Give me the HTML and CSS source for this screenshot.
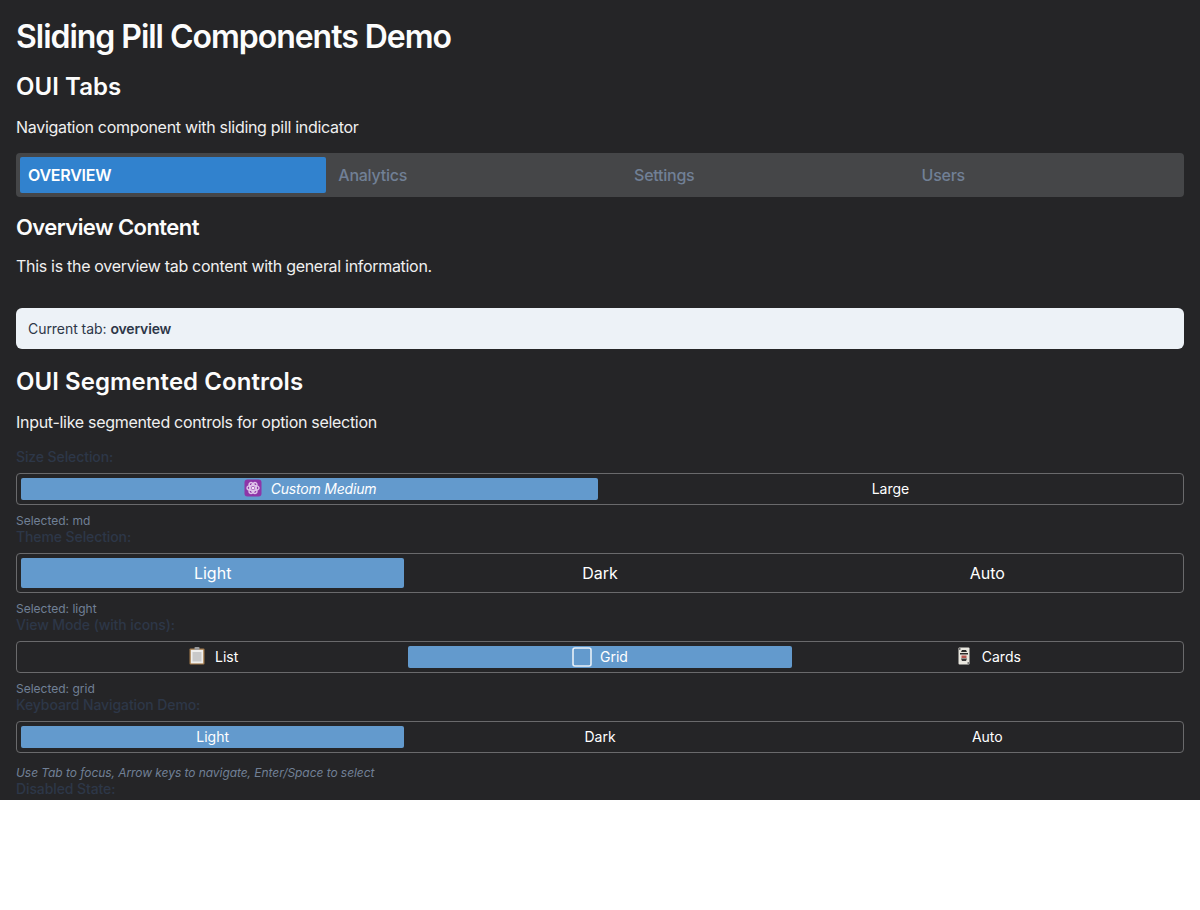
FILE: index.html
```html
<!DOCTYPE html>
<html lang="en">
<head>
<meta charset="utf-8">
<title>Sliding Pill Components Demo</title>
<link rel="stylesheet" href="styles.css">
</head>
<body>
<div class="page">
  <h1>Sliding Pill Components Demo</h1>
  <section>
    <h2>OUI Tabs</h2>
    <p class="lead">Navigation component with sliding pill indicator</p>
    <div class="tabs">
      <div class="tab tab-active">OVERVIEW</div>
      <div class="tab">Analytics</div>
      <div class="tab">Settings</div>
      <div class="tab">Users</div>
    </div>
    <div class="tab-panel">
      <h3>Overview Content</h3>
      <p class="lead">This is the overview tab content with general information.</p>
    </div>
    <div class="status">Current tab: <strong>overview</strong></div>
  </section>
  <section>
    <h2 class="seg-title">OUI Segmented Controls</h2>
    <p class="lead">Input-like segmented controls for option selection</p>

    <div class="demo">
      <div class="label">Size Selection:</div>
      <div class="seg">
        <div class="opt on">
          <svg class="ico" viewBox="0 0 18 18" aria-hidden="true">
            <rect x="0.5" y="0.5" width="17" height="17" rx="3" fill="#8e35a8"/>
            <g fill="none" stroke="#dfc4ea" stroke-width="1.4">
              <ellipse cx="9" cy="9" rx="6" ry="2.6"/>
              <ellipse cx="9" cy="9" rx="6" ry="2.6" transform="rotate(60 9 9)"/>
              <ellipse cx="9" cy="9" rx="6" ry="2.6" transform="rotate(120 9 9)"/>
            </g>
            <circle cx="9" cy="9" r="1.500" fill="#f3e6f7"/>
          </svg>
          <em>Custom Medium</em>
        </div>
        <div class="opt">Large</div>
      </div>
      <div class="hint">Selected: md</div>
    </div>

    <div class="demo">
      <div class="label">Theme Selection:</div>
      <div class="seg seg-lg">
        <div class="opt on">Light</div>
        <div class="opt">Dark</div>
        <div class="opt">Auto</div>
      </div>
      <div class="hint">Selected: light</div>
    </div>

    <div class="demo">
      <div class="label">View Mode (with icons):</div>
      <div class="seg">
        <div class="opt">
          <svg class="ico" viewBox="0 0 16 18" aria-hidden="true">
            <rect x="0.5" y="1.5" width="15" height="16" rx="1" fill="#a57c4c"/>
            <rect x="1.8" y="2.8" width="12.4" height="13.6" fill="#efeeec"/>
            <rect x="3.5" y="5" width="9" height="9.5" fill="#c9c9c9"/>
            <rect x="5.5" y="0" width="5" height="3" rx="0.8" fill="#9a9a9a"/>
          </svg>
          <span>List</span>
        </div>
        <div class="opt on">
          <svg class="ico ico-box" viewBox="0 0 20 20" aria-hidden="true">
            <rect x="1" y="1" width="18" height="18" rx="2" fill="none" stroke="#e8f0f8" stroke-width="1.6"/>
          </svg>
          <span>Grid</span>
        </div>
        <div class="opt">
          <svg class="ico" viewBox="0 0 12 18" aria-hidden="true">
            <rect x="0.5" y="0.5" width="11" height="17" rx="1" fill="#e8e6de"/>
            <path d="M3 5h6L8 3H4zM2 6h8v1.500H2z" fill="#2b2b2b"/>
            <path d="M3.500 8.500h5V11h-5z" fill="#b5544f"/>
            <path d="M3 11.500h6L8 14H4z" fill="#3a3a3a"/>
            <rect x="1" y="1" width="1.500" height="2" fill="#777"/>
            <rect x="9.500" y="15" width="1.500" height="2" fill="#777"/>
          </svg>
          <span>Cards</span>
        </div>
      </div>
      <div class="hint">Selected: grid</div>
    </div>

    <div class="demo">
      <div class="label">Keyboard Navigation Demo:</div>
      <div class="seg">
        <div class="opt on">Light</div>
        <div class="opt">Dark</div>
        <div class="opt">Auto</div>
      </div>
      <div class="hint hint-note">Use Tab to focus, Arrow keys to navigate, Enter/Space to select</div>
    </div>

    <div class="demo">
      <div class="label">Disabled State:</div>
    </div>
  </section>
</div>
</body>
</html>
```
FILE: styles.css
```css
html, body {
  margin: 0;
  padding: 0;
  background: #fff;
}
body {
  font-family: Inter, "Liberation Sans", sans-serif;
  color: #fff;
}
.page {
  box-sizing: border-box;
  height: 800px;
  overflow: hidden;
  background: #252527;
  padding: 16px 16px 0;
}
h1 {
  margin: 0 0 11px;
  font-size: 32px;
  line-height: 42px;
  font-weight: 600;
  letter-spacing: -1.03px;
  color: #fcfcfc;
}
h2 {
  margin: 0 0 10px;
  font-size: 24px;
  line-height: 36px;
  font-weight: 600;
  letter-spacing: 0.05px;
  color: #fcfcfc;
}
h3 {
  margin: 0 0 13px;
  font-size: 22px;
  line-height: 28px;
  font-weight: 600;
  letter-spacing: -0.55px;
  color: #fcfcfc;
}
.lead {
  margin: 0;
  font-size: 16px;
  line-height: 24px;
  letter-spacing: -0.3px;
  color: #f0f0f0;
}
.tabs {
  display: flex;
  margin-top: 14px;
  padding: 4px;
  height: 44px;
  box-sizing: border-box;
  background: #454648;
  border-radius: 4px;
}
.tab {
  flex: 1 1 auto;
  padding: 0 12px;
  font-size: 16px;
  font-weight: 500;
  line-height: 36px;
  letter-spacing: -0.25px;
  color: #718096;
}
.tab-active {
  padding-left: 8px;
  background: #3182ce;
  color: #fff;
  font-weight: 600;
  border-radius: 2px;
}
.tab-panel {
  margin-top: 16px;
}
.status {
  margin-top: 30px;
  padding: 12px;
  font-size: 14px;
  line-height: 17px;
  letter-spacing: -0.05px;
  background: #edf2f7;
  color: #2d3748;
  border-radius: 6px;
}
.status strong {
  font-weight: 600;
  letter-spacing: -0.15px;
}
.seg-title {
  margin-top: 15px;
}
.lead + .demo {
  margin-top: 14px;
}
.label {
  font-size: 14px;
  line-height: 17px;
  font-weight: 500;
  letter-spacing: -0.1px;
  color: #2d3748;
}
.seg {
  display: flex;
  gap: 4px;
  margin-top: 8px;
  padding: 4px;
  height: 32px;
  box-sizing: border-box;
  border: 1px solid #6a6a6c;
  border-radius: 4px;
}
.seg-lg {
  height: 40px;
}
.opt {
  flex: 1 1 0;
  min-width: 0;
  box-sizing: border-box;
  padding-bottom: 2px;
  display: flex;
  align-items: center;
  justify-content: center;
  gap: 8px;
  font-size: 14px;
  color: #fff;
  border-radius: 2px;
}
.seg-lg .opt {
  padding-bottom: 0;
  font-size: 16px;
}
.on {
  background: #639acd;
}
.opt em {
  font-style: italic;
  letter-spacing: -0.2px;
}
.ico {
  width: 20px;
  height: 18px;
  margin-top: -1px;
}
.ico-box {
  height: 20px;
  margin-top: 1px;
}
.hint {
  margin-top: 8px;
  font-size: 12px;
  line-height: 15px;
  color: #718096;
}
.hint-note {
  margin-top: 12px;
  font-style: italic;
  letter-spacing: -0.06px;
}
```
